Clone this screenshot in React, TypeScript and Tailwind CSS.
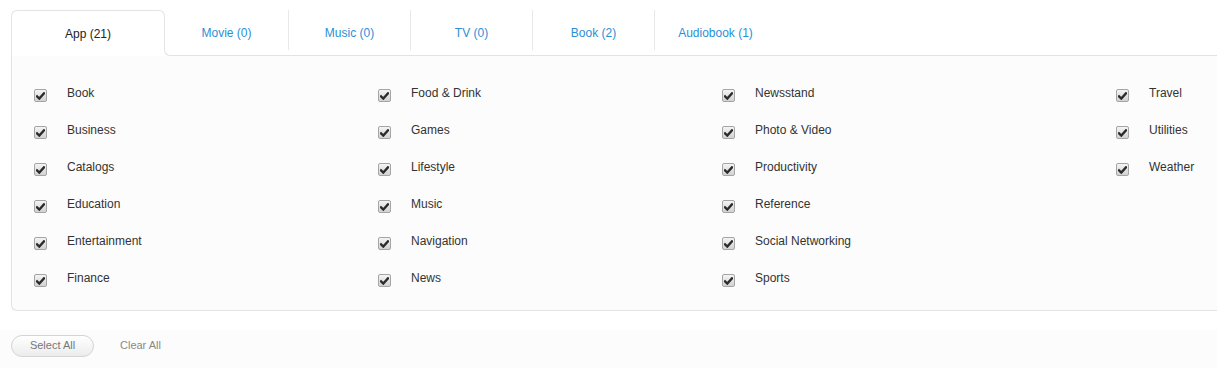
import React from "react";

const columns: { width: string; items: string[] }[] = [
  { width: "w-[344px]", items: ["Book", "Business", "Catalogs", "Education", "Entertainment", "Finance"] },
  { width: "w-[344px]", items: ["Food & Drink", "Games", "Lifestyle", "Music", "Navigation", "News"] },
  { width: "w-[394px]", items: ["Newsstand", "Photo & Video", "Productivity", "Reference", "Social Networking", "Sports"] },
  { width: "w-[100px]", items: ["Travel", "Utilities", "Weather"] },
];

const tabs = [
  { label: "Movie (0)", cls: "w-[124px] border-r" },
  { label: "Music (0)", cls: "w-[122px] border-r" },
  { label: "TV (0)", cls: "w-[122px] border-r" },
  { label: "Book (2)", cls: "w-[122px] border-r" },
  { label: "Audiobook (1)", cls: "w-[121px]" },
];

function Check() {
  return (
    <span className="mt-[6px] flex h-[13px] w-[13px] shrink-0 items-center justify-center rounded-[2px] border border-[#a5a5a5] bg-linear-to-b from-[#f4f4f4] to-[#d2d2d2]">
      <svg width="9" height="8" viewBox="0 0 9 8">
        <path d="M1 4.3 L3.3 6.6 L8 1.3" fill="none" stroke="#2b2b2b" strokeWidth="2.3" strokeLinecap="square" />
      </svg>
    </span>
  );
}

export default function App() {
  return (
    <div className="h-[368px] w-[1217px] overflow-hidden bg-white font-['Liberation_Sans',Arial,sans-serif] text-[12px]">
      <div className="pl-[11px] pt-[10px]">
        <div className="flex h-[46px]">
          <div className="flex w-[154px] flex-col">
            <div className="flex h-[40px] items-center justify-center rounded-t-[6px] border-l border-r border-t border-[#e3e3e3] bg-white pt-[6px] text-[#222]">
              App (21)
            </div>
            <div className="flex-1 border-l border-[#e3e3e3] bg-white" />
          </div>
          <div className="-ml-px flex flex-1 flex-col">
            <div className="flex h-[40px] pl-px">
              {tabs.map((t) => (
                <div
                  key={t.label}
                  className={`flex h-full items-center justify-center border-[#e8e8e8] pt-[6px] text-[#2a8fd6] ${t.cls}`}
                >
                  {t.label}
                </div>
              ))}
            </div>
            <div className="flex-1 rounded-bl-[6px] border-b border-l border-[#e3e3e3]" />
          </div>
        </div>
        <div className="flex rounded-bl-[6px] border-b border-l border-[#e3e3e3] bg-[#fcfcfc] pb-[14px] pl-[22px] pt-[18px]">
          {columns.map((col, i) => (
            <div key={i} className={`flex shrink-0 flex-col ${col.width}`}>
              {col.items.map((name) => (
                <div key={name} className="flex h-[37px] items-center gap-[20px]">
                  <Check />
                  <span className="whitespace-nowrap text-[#333]">{name}</span>
                </div>
              ))}
            </div>
          ))}
        </div>
      </div>
      <div className="mt-[19px] flex h-[60px] items-start bg-[#fcfcfc] pl-[11px] pt-[5px]">
        <button className="h-[22px] w-[83px] rounded-full border border-[#d4d4d4] bg-linear-to-b from-white to-[#ececec] pb-px text-[11px] text-[#777]">
          Select All
        </button>
        <span className="ml-[26px] mt-[2px] text-[11px] text-[#888]">Clear All</span>
      </div>
    </div>
  );
}
